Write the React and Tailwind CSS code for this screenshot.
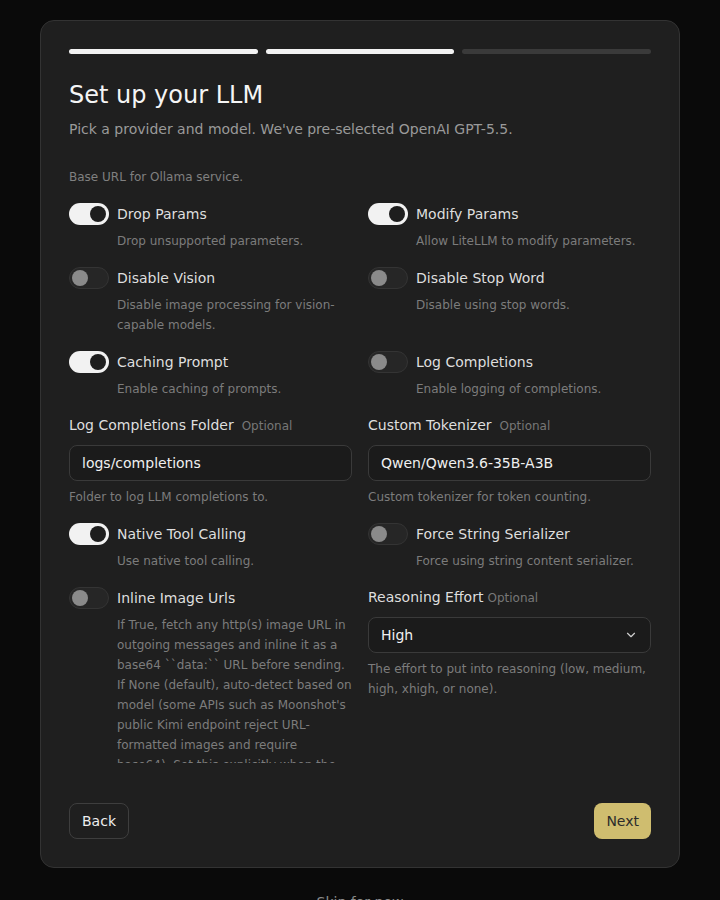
import { ChevronDown } from 'lucide-react';

const Toggle = ({ on }) => (
  <div
    className={
      on
        ? 'flex h-[22px] w-10 shrink-0 items-center justify-end rounded-full bg-[#f2f2f2] px-[3px]'
        : 'flex h-[22px] w-10 shrink-0 items-center justify-start rounded-full border border-[#343434] bg-[#262626] px-[2px]'
    }
  >
    <div className={on ? 'h-4 w-4 rounded-full bg-[#1e1e1e]' : 'h-4 w-4 rounded-full bg-[#8a8a8a]'} />
  </div>
);

const SwitchField = ({ on, label, desc }) => (
  <div className="flex flex-col">
    <div className="flex items-center gap-2">
      <Toggle on={on} />
      <span className="text-sm text-[#dedede]">{label}</span>
    </div>
    <p className="mt-1.5 pl-12 text-xs leading-5 text-[#7c7c7c]">{desc}</p>
  </div>
);

const TextField = ({ label, value, help, tight }) => (
  <div className="flex flex-col">
    <div className="flex items-baseline leading-5">
      <span className="text-sm text-[#dedede]">{label}</span>
      <span className={tight ? 'ml-1 text-xs text-[#777]' : 'ml-2 text-xs text-[#777]'}>Optional</span>
    </div>
    <div className="mt-[10px] flex h-9 items-center rounded-lg border border-[#3a3a3a] bg-[#1b1b1b] px-3 text-sm text-[#f0f0f0]">
      {value}
    </div>
    <p className="mt-1.5 text-xs leading-5 text-[#7c7c7c]">{help}</p>
  </div>
);

export default function App() {
  return (
    <div className="min-h-[900px] bg-[#0a0a0a] pt-5 font-['DejaVu_Sans',sans-serif]">
      <div className="mx-auto flex w-[640px] flex-col rounded-[14px] border border-[#333] bg-[#1f1f1f] px-7 pb-7 pt-7">
        {/* progress */}
        <div className="flex gap-2">
          <div className="h-[5px] flex-1 rounded-full bg-[#f2f2f2]" />
          <div className="h-[5px] flex-1 rounded-full bg-[#f2f2f2]" />
          <div className="h-[5px] flex-1 rounded-full bg-[#3a3a3a]" />
        </div>

        <h1 className="mt-[25px] text-2xl leading-8 text-[#f5f5f5]">Set up your LLM</h1>
        <p className="mt-2 text-sm leading-5 text-[#9a9a9a]">
          Pick a provider and model. We've pre-selected OpenAI GPT-5.5.
        </p>

        {/* scroll area */}
        <div className="mt-6 h-[600px] overflow-hidden">
          <p className="pt-1 text-xs leading-5 text-[#808080]">Base URL for Ollama service.</p>
          <div className="mt-4 grid grid-cols-2 gap-x-4 gap-y-4">
            <SwitchField on label="Drop Params" desc="Drop unsupported parameters." />
            <SwitchField on label="Modify Params" desc="Allow LiteLLM to modify parameters." />
            <SwitchField label="Disable Vision" desc="Disable image processing for vision-capable models." />
            <SwitchField label="Disable Stop Word" desc="Disable using stop words." />
            <SwitchField on label="Caching Prompt" desc="Enable caching of prompts." />
            <SwitchField label="Log Completions" desc="Enable logging of completions." />
            <TextField label="Log Completions Folder" value="logs/completions" help="Folder to log LLM completions to." />
            <TextField label="Custom Tokenizer" value="Qwen/Qwen3.6-35B-A3B" help="Custom tokenizer for token counting." />
            <SwitchField on label="Native Tool Calling" desc="Use native tool calling." />
            <SwitchField label="Force String Serializer" desc="Force using string content serializer." />
            <SwitchField
              label="Inline Image Urls"
              desc="If True, fetch any http(s) image URL in outgoing messages and inline it as a base64 ``data:`` URL before sending. If None (default), auto-detect based on model (some APIs such as Moonshot's public Kimi endpoint reject URL-formatted images and require base64). Set this explicitly when the auto-detection picks the wrong behaviour."
            />
            <div className="flex flex-col">
              <div className="flex items-baseline leading-5">
                <span className="text-sm text-[#dedede]">Reasoning Effort</span>
                <span className="ml-1 text-xs text-[#777]">Optional</span>
              </div>
              <div className="mt-[10px] flex h-9 items-center justify-between rounded-lg border border-[#3a3a3a] bg-[#1b1b1b] px-3 text-sm text-[#f0f0f0]">
                <span>High</span>
                <ChevronDown size={14} className="text-[#cfcfcf]" />
              </div>
              <p className="mt-1.5 text-xs leading-5 text-[#7c7c7c]">
                The effort to put into reasoning (low, medium, high, xhigh, or none).
              </p>
            </div>
          </div>
        </div>

        {/* footer */}
        <div className="mt-10 flex items-center justify-between">
          <button className="h-9 rounded-lg border border-[#3e3e3e] bg-transparent px-3 text-sm text-[#eee]">Back</button>
          <button className="h-9 rounded-lg bg-[#cfbd6f] px-3 text-sm text-[#2b2b2b]">Next</button>
        </div>
      </div>
      <p className="mt-6 text-center text-sm text-[#8a8a8a]">Skip for now</p>
    </div>
  );
}
